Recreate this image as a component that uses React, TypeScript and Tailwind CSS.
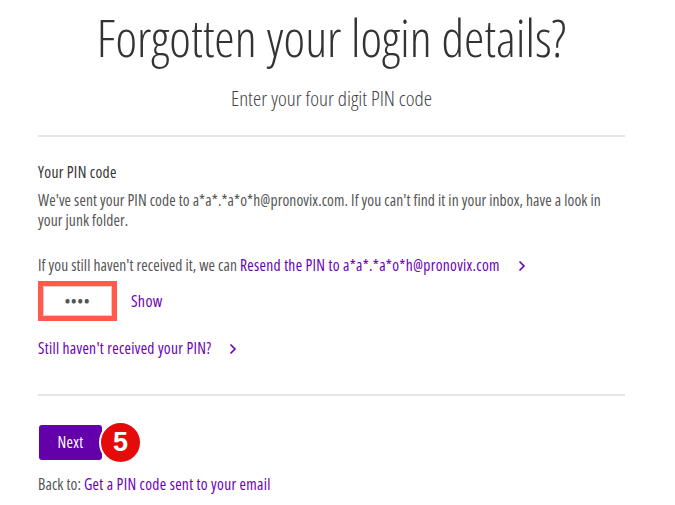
import React from 'react';

const Chevron: React.FC = () => (
  <svg width="8" height="12" viewBox="0 0 8 12" className="inline-block ml-[18px] -mt-0.5" fill="none">
    <path d="M1.5 1.5 6 6l-4.5 4.5" stroke="#6b00b6" strokeWidth="1.6" />
  </svg>
);

const App: React.FC = () => {
  return (
    <div className="w-[675px] h-[505px] bg-white overflow-hidden font-['Open_Sans',sans-serif] font-stretch-condensed text-[#555] tracking-[0.1px]">
      <div className="ml-[38px] w-[587px]">
        <h1 className="pt-[8px] text-center text-[51.5px] leading-[58px] font-light text-[#333] tracking-normal">
          Forgotten your login details?
        </h1>
        <p className="mt-[19px] text-center text-[21px] leading-[26px] font-light text-[#444] tracking-normal">
          Enter your four digit PIN code
        </p>

        <div className="mt-[24px] border-t-2 border-[#e6e6e6]" />

        <h2 className="mt-[25px] text-[15.5px] leading-[20px] font-medium text-[#333] tracking-[0.3px]">Your PIN code</h2>
        <p className="mt-[8px] text-[15.5px] leading-[20px]">
          We've sent your PIN code to a*a*.*a*o*h@pronovix.com. If you can't find it in your inbox, have a look in your junk folder.
        </p>
        <p className="mt-[25px] text-[15.5px] leading-[20px]">
          If you still haven't received it, we can{' '}
          <a className="text-[#6b00b6] font-medium tracking-[0.3px]">Resend the PIN to a*a*.*a*o*h@pronovix.com</a>
          <Chevron />
        </p>

        <div className="mt-[6px] flex items-center gap-[14px]">
          <div className="w-[79px] h-[40px] border-[5px] border-[#ff5a4c] flex items-center justify-center">
            <div className="w-full h-full border border-[#f4c6c0] flex items-center justify-center text-[#555] text-[14px] tracking-[1px] font-bold">
              ••••
            </div>
          </div>
          <a className="text-[#6b00b6] text-[16px] font-medium tracking-[0.3px]">Show</a>
        </div>

        <a className="mt-[17px] block text-[#6b00b6] text-[15.5px] leading-[20px] font-medium tracking-[0.3px]">
          Still haven't received your PIN?
          <Chevron />
        </a>

        <div className="mt-[36px] border-t-2 border-[#e6e6e6]" />

        <div className="mt-[25px] flex items-center">
          <button className="ml-px w-[63px] h-[35px] rounded-[3px] bg-[#6400aa] text-white text-[15.5px] tracking-[0.3px]">Next</button>
          <div className="-ml-[3px] w-[43px] h-[43px] rounded-full bg-[#e50b0b] border-2 border-white flex items-center justify-center text-white text-[27px] font-bold font-['Liberation_Sans',sans-serif] tracking-normal">
            5
          </div>
        </div>

        <p className="mt-[10px] text-[15.5px] leading-[20px]">
          Back to: <a className="text-[#6b00b6] font-medium tracking-[0.3px]">Get a PIN code sent to your email</a>
        </p>
      </div>
    </div>
  );
};

export default App;
